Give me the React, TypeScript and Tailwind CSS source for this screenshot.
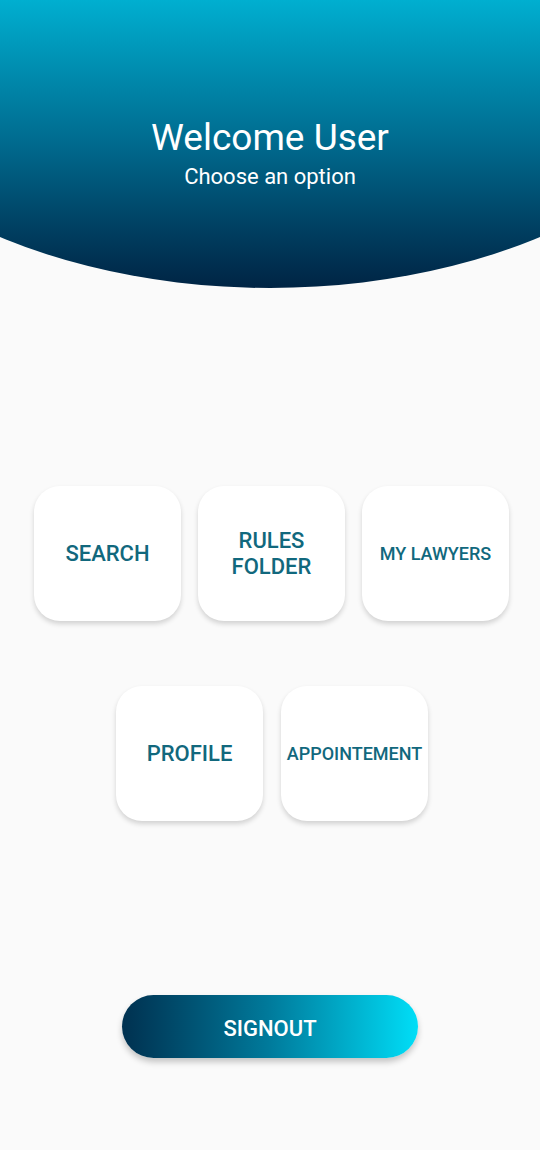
import React from 'react'

const ROW_ONE = [
  { label: 'SEARCH', size: 'text-[22px]' },
  { label: 'RULES FOLDER', size: 'text-[22px]' },
  { label: 'MY LAWYERS', size: 'text-[18px]' },
]

const ROW_TWO = [
  { label: 'PROFILE', size: 'text-[22px]' },
  { label: 'APPOINTEMENT', size: 'text-[18px]' },
]

function OptionCard({ label, size }: { label: string; size: string }) {
  return (
    <button
      className={`w-[147px] h-[135px] rounded-[26px] bg-white flex items-center justify-center text-center px-1 font-medium leading-[26px] text-[#11687d] shadow-[0_3px_5px_rgba(0,0,0,0.16)] ${size}`}
    >
      {label === 'RULES FOLDER' ? (
        <span>RULES<br />FOLDER</span>
      ) : (
        <span>{label}</span>
      )}
    </button>
  )
}

export default function App() {
  return (
    <div className="w-[540px] min-h-[1150px] bg-[#fafafa] flex flex-col font-['Roboto','Liberation_Sans',sans-serif]">
      {/* Curved header */}
      <div className="h-[288px] w-full bg-gradient-to-b from-[#00afd0] via-[#006a8e] to-[#002444] [clip-path:ellipse(88%_100%_at_50%_0%)] flex flex-col items-center pt-[116px] text-white">
        <h1 className="text-[37px] leading-[44px] font-normal">Welcome User</h1>
        <p className="text-[22px] leading-[26px] mt-[4px]">Choose an option</p>
      </div>

      {/* Options */}
      <div className="mt-[198px] flex justify-center gap-[17px] pl-[3px]">
        {ROW_ONE.map(o => <OptionCard key={o.label} {...o} />)}
      </div>
      <div className="mt-[65px] flex justify-center gap-[18px] pl-[4px]">
        {ROW_TWO.map(o => <OptionCard key={o.label} {...o} />)}
      </div>

      {/* Sign out */}
      <div className="mt-[174px] flex justify-center">
        <button className="w-[296px] h-[63px] rounded-full bg-gradient-to-r from-[#003150] via-[#007b9c] to-[#00def7] text-white text-[22px] font-medium pt-[3px] shadow-[0_4px_6px_rgba(0,0,0,0.22)]">
          SIGNOUT
        </button>
      </div>
    </div>
  )
}
